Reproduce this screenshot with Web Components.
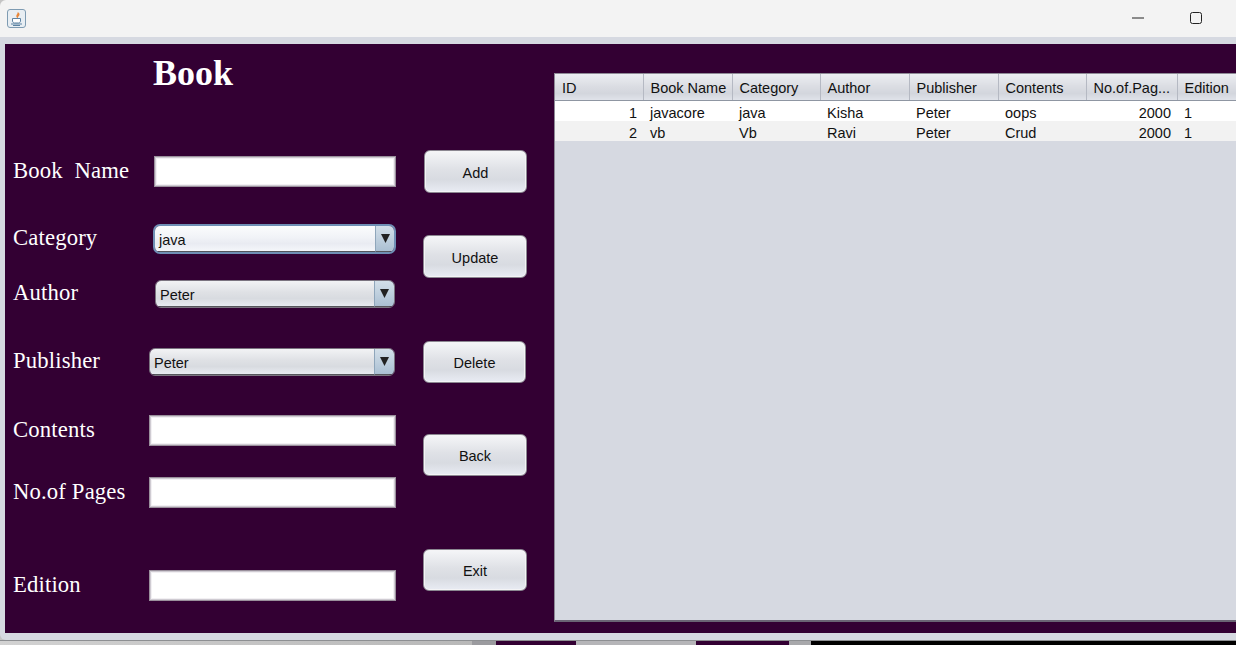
<!DOCTYPE html>
<html>
<head>
<meta charset="utf-8">
<title>Book</title>
<style>
html, body { margin: 0; padding: 0; height: 645px; overflow: hidden; background: #000; }
</style>
</head>
<body>
<app-window>
    <book-form slot="left">
        <form-row label="Book  Name" top="67" indent="154" shift="-1"><text-field></text-field></form-row>
        <form-row label="Category" top="37" indent="153" shift="-1"><combo-box value="java" focused></combo-box></form-row>
        <form-row label="Author" top="26" indent="155" right="1" shift="-1"><combo-box value="Peter"></combo-box></form-row>
        <form-row label="Publisher" top="40" indent="149" right="1" shift="-1"><combo-box value="Peter"></combo-box></form-row>
        <form-row label="Contents" top="39" indent="149" shift="-1"><text-field></text-field></form-row>
        <form-row label="No.of Pages" top="31" indent="149" shift="-1"><text-field></text-field></form-row>
        <form-row label="Edition" top="62" indent="149" shift="-1"><text-field></text-field></form-row>
    </book-form>
    <button-column slot="middle">
        <push-button top="106" left="1">Add</push-button>
        <push-button top="42">Update</push-button>
        <push-button top="63" trim="1" short>Delete</push-button>
        <push-button top="51" short>Back</push-button>
        <push-button top="73" short>Exit</push-button>
    </button-column>
    <book-table slot="right"></book-table>
</app-window>

<script>
class AppWindow extends HTMLElement {
    constructor() {
        super();
        this.attachShadow({mode: 'open'}).innerHTML = `
        <style>
        :host { display: flex; flex-direction: column; width: 1236px; height: 645px; background: #c4c4c4; }
        .titlebar {
            height: 37px;
            flex: none;
            display: flex;
            align-items: center;
            background: #f3f3f3;
            border-radius: 6px 0 0 0;
        }
        .app-icon { margin: 0 0 0 7px; display: block; }
        .controls { margin: 0 0 2px auto; display: flex; align-items: center; }
        .controls svg { display: block; }
        .frame {
            height: 603px;
            flex: none;
            box-sizing: border-box;
            padding: 7px 0 7px 5px;
            background: #d6d9e1;
            border-radius: 0 0 0 6px;
        }
        .content {
            height: 100%;
            display: flex;
            align-items: flex-start;
            background: #303;
        }
        .left { display: block; width: 414px; flex: none; }
        .middle { display: block; width: 135px; flex: none; }
        .right { display: block; flex: 1; min-width: 0; }
        .desktop { height: 5px; flex: none; display: flex; border-top: 1px solid #8d8f92; box-sizing: border-box; }
        .desktop div { height: 100%; }
        </style>
        <div class="titlebar">
            <svg class="app-icon" width="20" height="19" viewBox="0 0 20 19">
                <rect x=".5" y=".5" width="18" height="18" rx="2.500" fill="#e8eef3" stroke="#7e9bb2"/>
                <path d="M10.500 3c1 1.500-2 2.500-1 5 .3.800 1 1 1.500 1-.6-1.600 2.600-2.400 1.200-4.800C12 3.800 11 3.300 10.500 3z" fill="#e8873a"/>
                <path d="M5.500 9.500h8v2.500c0 1.200-1 2-2 2h-4c-1 0-2-.8-2-2z" fill="#fff" stroke="#5d83a3"/>
                <path d="M4 15h11M6 16.500h7" stroke="#5d83a3" fill="none"/>
            </svg>
            <div class="controls">
                <svg width="12" height="2" viewBox="0 0 12 2" style="margin-right:46px"><path d="M0 1h12" stroke="#222" stroke-width="1"/></svg>
                <svg width="12" height="12" viewBox="0 0 12 12" style="margin-right:34px"><rect x=".5" y=".5" width="11" height="11" rx="2" fill="none" stroke="#222"/></svg>
            </div>
        </div>
        <div class="frame">
            <div class="content">
                <slot class="left" name="left"></slot>
                <slot class="middle" name="middle"></slot>
                <slot class="right" name="right"></slot>
            </div>
        </div>
        <div class="desktop">
            <div style="width:472px;background:linear-gradient(90deg,#d2d2d2,#b8b8b8)"></div>
            <div style="width:24px;background:#9b9b9f"></div>
            <div style="width:80px;background:#303"></div>
            <div style="width:120px;background:#b5b5b8"></div>
            <div style="width:93px;background:#303"></div>
            <div style="width:22px;background:#a8a8ab"></div>
            <div style="flex:1;background:#000"></div>
        </div>
        `;
    }
}

class BookForm extends HTMLElement {
    constructor() {
        super();
        this.attachShadow({mode: 'open'}).innerHTML = `
        <style>
        :host { display: block; }
        h1 {
            margin: 0;
            padding: 7px 0 0 148px;
            height: 38px;
            font: bold 36px/44px "Liberation Serif", serif;
            color: #fff;
        }
        </style>
        <h1>Book</h1>
        <slot></slot>
        `;
    }
}

class FormRow extends HTMLElement {
    constructor() {
        super();
        this.attachShadow({mode: 'open'});
    }

    connectedCallback() {
        const top = this.getAttribute('top') || 0;
        const indent = this.getAttribute('indent') || 149;
        const right = this.getAttribute('right') || 0;
        const shift = this.getAttribute('shift') || 0;
        this.shadowRoot.innerHTML = `
        <style>
        :host {
            display: flex;
            align-items: center;
            margin-top: ${top}px;
            margin-right: ${23 + Number(right)}px;
        }
        .label {
            flex: none;
            width: ${indent - 13}px;
            margin: ${shift * 2}px 0 0 8px;
            font: 22.7px/26px "Liberation Serif", serif;
            letter-spacing: .15px;
            color: #fff;
            white-space: pre;
        }
        .field { display: block; flex: 1; min-width: 0; }
        </style>
        <span class="label">${this.getAttribute('label')}</span>
        <slot class="field"></slot>
        `;
    }
}

class TextField extends HTMLElement {
    constructor() {
        super();
        this.attachShadow({mode: 'open'}).innerHTML = `
        <style>
        :host {
            display: block;
            height: 31px;
            box-sizing: border-box;
            background: #fff;
            border: 1px solid #9a909c;
            box-shadow: inset 0 0 0 1px #cfcbd2, inset 0 0 0 2px #f2f0f3;
        }
        </style>
        `;
    }
}

class ComboBox extends HTMLElement {
    constructor() {
        super();
        this.attachShadow({mode: 'open'});
    }

    connectedCallback() {
        const focused = this.hasAttribute('focused');
        this.shadowRoot.innerHTML = `
        <style>
        :host {
            display: flex;
            box-sizing: border-box;
            height: ${focused ? 30 : 28}px;
            border-radius: ${focused ? 7 : 6}px;
            overflow: hidden;
            border: ${focused ? '2px solid #6f8fb5' : '1px solid #7b7480'};
            font: 14.5px "Liberation Sans", sans-serif;
            color: #111;
        }
        .value {
            flex: 1;
            display: flex;
            align-items: center;
            padding: 2px 0 0 4px;
            border-bottom: 1px solid #55565c;
            background: ${focused
                ? 'linear-gradient(#fbfcfd 0, #f1f3f7 45%, #e9ebf2 70%, #f4f6fa 100%)'
                : 'linear-gradient(#f2f3f5 0, #dfe1e5 45%, #d8dbe0 70%, #e8ebf1 100%)'};
        }
        .arrow {
            flex: none;
            width: ${focused ? 18 : 19}px;
            display: flex;
            align-items: center;
            justify-content: center;
            border-left: 1px solid #8fa6bb;
            border-bottom: 1px solid #55565c;
            background: linear-gradient(#d3dfe9, #abc0d3);
        }
        </style>
        <span class="value">${this.getAttribute('value')}</span>
        <span class="arrow">
            <svg width="9" height="9" viewBox="0 0 9 9"><path d="M0 0h9L4.500 9z" fill="#222"/></svg>
        </span>
        `;
    }
}

class ButtonColumn extends HTMLElement {
    constructor() {
        super();
        this.attachShadow({mode: 'open'}).innerHTML = `
        <style>
        :host { display: flex; flex-direction: column; align-items: flex-start; padding-left: 4px; }
        </style>
        <slot></slot>
        `;
    }
}

class PushButton extends HTMLElement {
    constructor() {
        super();
        this.attachShadow({mode: 'open'});
    }

    connectedCallback() {
        const top = this.getAttribute('top') || 0;
        const left = Number(this.getAttribute('left') || 0);
        const trim = Number(this.getAttribute('trim') || 0);
        const short = this.hasAttribute('short');
        this.shadowRoot.innerHTML = `
        <style>
        :host {
            display: flex;
            align-items: center;
            justify-content: center;
            box-sizing: border-box;
            flex: none;
            margin: ${top}px 0 0 ${left}px;
            padding-top: ${short ? 1 : 2}px;
            width: ${104 - left - trim}px;
            height: ${short ? 42 : 43}px;
            border: 1px solid #8b8791;
            border-radius: 6px;
            background: linear-gradient(#f5f6f8 0, #dfe1e6 45%, #d8dbe1 70%, #e9ecf4 100%);
            box-shadow: inset 0 0 0 1px #f4f4f6;
            font: 14.5px "Liberation Sans", sans-serif;
            color: #111;
        }
        </style>
        <slot></slot>
        `;
    }
}

class BookTable extends HTMLElement {
    constructor() {
        super();
        this.attachShadow({mode: 'open'});
        this.columns = [
            ['ID', 88], ['Book Name', 89], ['Category', 88], ['Author', 89],
            ['Publisher', 89], ['Contents', 88], ['No.of.Pag...', 91], ['Edition', 60]
        ];
        this.rows = [
            [1, 'javacore', 'java', 'Kisha', 'Peter', 'oops', 2000, 1],
            [2, 'vb', 'Vb', 'Ravi', 'Peter', 'Crud', 2000, 1]
        ];
    }

    connectedCallback() {
        const cols = this.columns.map(c => `<col style="width:${c[1]}px">`).join('');
        const head = this.columns.map(c => `<th>${c[0]}</th>`).join('');
        const body = this.rows.map(r => `<tr>${r.map((v, i) =>
            `<td class="${typeof v === 'number' && i !== 7 ? 'num' : ''}">${v}</td>`).join('')}</tr>`).join('');
        this.shadowRoot.innerHTML = `
        <style>
        :host {
            display: block;
            box-sizing: border-box;
            margin-top: 29px;
            height: 549px;
            overflow: hidden;
            background: #d6d9e1;
            border: 1px solid #8e8a96;
            border-right: 0;
            border-bottom: 2px solid #6a6474;
            font: 14.5px "Liberation Sans", sans-serif;
            color: #111;
        }
        table { border-collapse: collapse; table-layout: fixed; width: 682px; }
        th {
            height: 26px;
            box-sizing: border-box;
            padding: 2px 0 0 7px;
            font-weight: normal;
            text-align: left;
            white-space: nowrap;
            border-right: 1px solid #b5b9c3;
            border-bottom: 1px solid #8f96a2;
            background: linear-gradient(#eceef2 0, #dadce2 50%, #d3d6dd 75%, #e0e3ea 100%);
        }
        td {
            height: 20px;
            box-sizing: border-box;
            padding: 4px 6px 0 7px;
            line-height: 16px;
            white-space: nowrap;
            overflow: hidden;
        }
        td.num { text-align: right; }
        tr:nth-child(odd) td { background: #fff; }
        tr:nth-child(even) td { background: #f2f2f2; }
        </style>
        <table>
            <colgroup>${cols}</colgroup>
            <thead><tr>${head}</tr></thead>
            <tbody>${body}</tbody>
        </table>
        `;
    }
}

customElements.define('app-window', AppWindow);
customElements.define('book-form', BookForm);
customElements.define('form-row', FormRow);
customElements.define('text-field', TextField);
customElements.define('combo-box', ComboBox);
customElements.define('button-column', ButtonColumn);
customElements.define('push-button', PushButton);
customElements.define('book-table', BookTable);
</script>
</body>
</html>
